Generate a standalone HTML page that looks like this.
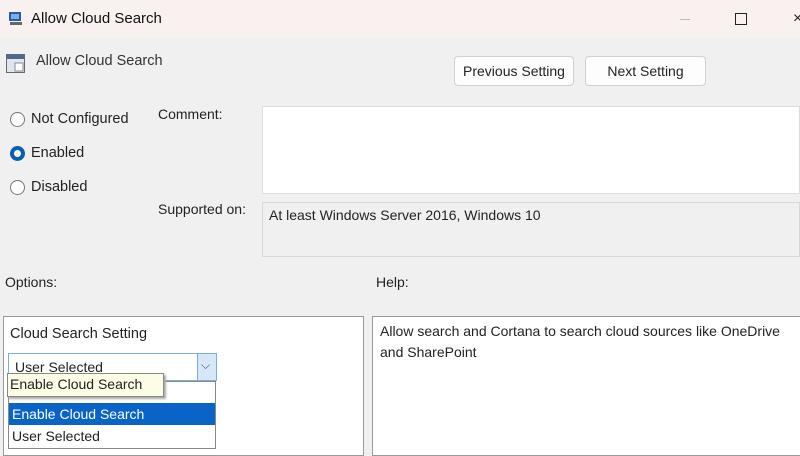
<!DOCTYPE html>
<html><head><style>
*{margin:0;padding:0;box-sizing:border-box}
body{width:800px;height:452px;overflow:hidden;background:#f0f0f0;font-family:"Liberation Sans",sans-serif;font-size:14px;color:#222;position:relative}
.a{position:absolute;white-space:nowrap}
.btn{position:absolute;background:#fdfdfd;border:1px solid #d0d0d0;border-radius:4px;height:30px;text-align:center;line-height:28px;font-size:14px}
.rad{position:absolute;width:15px;height:15px;border-radius:50%;border:1px solid #777;background:#fff}
</style></head><body>
<div class="a" style="left:0;top:0;width:800px;height:38px;background:#f8f1f0"></div>
<svg class="a" style="left:8px;top:11px" width="16" height="15"><rect x="1" y="1" width="12" height="9" fill="#2a5aa8"/><rect x="3" y="3" width="8" height="5" fill="#7ab0e8"/><rect x="2" y="11" width="12" height="3" fill="#666"/></svg>
<div class="a" style="left:31px;top:10px;font-size:15px;color:#111">Allow Cloud Search</div>
<div class="a" style="left:680px;top:19px;width:10px;height:1px;background:#bbb"></div>
<div class="a" style="left:735px;top:13px;width:12px;height:12px;border:1.5px solid #222"></div>
<div class="a" style="left:793px;top:10px;font-size:16px">×</div>
<svg class="a" style="left:6px;top:54px" width="20" height="20"><rect x="0.5" y="0.5" width="18" height="18" fill="#dfe6ec" stroke="#667"/><rect x="1" y="1" width="17" height="4" fill="#4a6a8a"/><rect x="9" y="9" width="8" height="8" fill="#fff" stroke="#889"/></svg>
<div class="a" style="left:36px;top:53px;font-size:14.5px;color:#333">Allow Cloud Search</div>
<div class="btn" style="left:454px;top:56px;width:120px">Previous Setting</div>
<div class="btn" style="left:585px;top:56px;width:121px">Next Setting</div>
<div class="rad" style="left:10px;top:112px"></div>
<div class="a" style="left:31px;top:111px;font-size:14.5px">Not Configured</div>
<div class="rad" style="left:10px;top:146px;border:4.5px solid #0a5fb4"></div>
<div class="a" style="left:31px;top:145px;font-size:14.5px">Enabled</div>
<div class="rad" style="left:10px;top:180px"></div>
<div class="a" style="left:31px;top:179px;font-size:14.5px">Disabled</div>
<div class="a" style="left:158px;top:106px">Comment:</div>
<div class="a" style="left:262px;top:106px;width:538px;height:88px;background:#fff;border:1px solid #ddd"></div>
<div class="a" style="left:158px;top:201px">Supported on:</div>
<div class="a" style="left:262px;top:202px;width:538px;height:55px;background:#f0f0f0;border:1px solid #d8d8d8"></div>
<div class="a" style="left:269px;top:207px">At least Windows Server 2016, Windows 10</div>
<div class="a" style="left:5px;top:274px">Options:</div>
<div class="a" style="left:376px;top:274px">Help:</div>
<div class="a" style="left:3px;top:316px;width:361px;height:140px;background:#fff;border:1px solid #999"></div>
<div class="a" style="left:372px;top:316px;width:430px;height:140px;background:#fff;border:1px solid #999"></div>
<div class="a" style="left:380px;top:321px;line-height:21px;font-size:14px">Allow search and Cortana to search cloud sources like OneDrive<br>and SharePoint</div>
<div class="a" style="left:10px;top:326px;font-size:14.5px">Cloud Search Setting</div>
<div class="a" style="left:8px;top:353px;width:209px;height:28px;background:#fff;border:1px solid #7aaee0"></div>
<div class="a" style="left:197px;top:353px;width:20px;height:28px;background:#d6e8f8;border:1px solid #7aaee0"></div>
<div class="a" style="left:201px;top:358px;font-size:12px;color:#555">⌵</div>
<div class="a" style="left:15px;top:359px">User Selected</div>
<div class="a" style="left:8px;top:381px;width:208px;height:68px;background:#fff;border:1px solid #888"></div>
<div class="a" style="left:9px;top:403px;width:206px;height:22px;background:#0a64c8"></div>
<div class="a" style="left:12px;top:406px;color:#fff">Enable Cloud Search</div>
<div class="a" style="left:12px;top:428px">User Selected</div>
<div class="a" style="left:7px;top:373px;width:157px;height:24px;background:#fdfde6;border:1px solid #888;box-shadow:2px 2px 2px #aaa"></div>
<div class="a" style="left:10px;top:376px">Enable Cloud Search</div>
</body></html>
